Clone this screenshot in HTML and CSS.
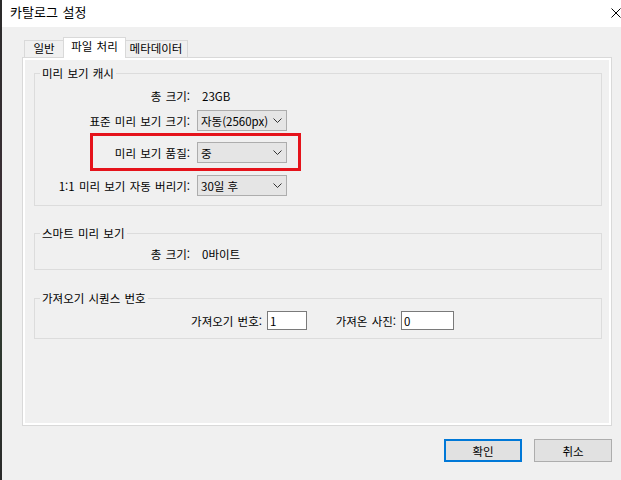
FILE: index.html
```html
<!DOCTYPE html>
<html lang="ko">
<head>
<meta charset="utf-8">
<title>카탈로그 설정</title>
<link rel="stylesheet" href="styles.css">
</head>
<body>
<div class="screen">
  <div class="strip"></div>
  <div class="window">
    <div class="titlebar">
      <span class="title">카탈로그 설정</span>
      <svg class="close" width="10" height="10" viewBox="0 0 10 10"><path d="M0.5 0.5 L9.5 9.5 M9.5 0.5 L0.5 9.5" stroke="#000" stroke-width="1" fill="none"/></svg>
    </div>
    <div class="content">
      <div class="tabs">
        <div class="tab t1">일반</div>
        <div class="tab t2 active">파일 처리</div>
        <div class="tab t3">메타데이터</div>
      </div>
      <div class="panel">
        <fieldset class="group g1">
          <legend>미리 보기 캐시</legend>
          <div class="row r1"><span class="label">총 크기:</span><span class="value">23GB</span></div>
          <div class="row r2"><span class="label">표준 미리 보기 크기:</span>
            <div class="select"><span>자동(2560px)</span><svg width="9" height="5" viewBox="0 0 9 5"><polyline points="0.5,0.5 4.5,4.5 8.5,0.5" fill="none" stroke="#333" stroke-width="1"/></svg></div>
          </div>
          <div class="row r3"><span class="label">미리 보기 품질:</span>
            <div class="select"><span>중</span><svg width="9" height="5" viewBox="0 0 9 5"><polyline points="0.5,0.5 4.5,4.5 8.5,0.5" fill="none" stroke="#333" stroke-width="1"/></svg></div>
            <div class="highlight"></div>
          </div>
          <div class="row r4"><span class="label">1:1 미리 보기 자동 버리기:</span>
            <div class="select"><span>30일 후</span><svg width="9" height="5" viewBox="0 0 9 5"><polyline points="0.5,0.5 4.5,4.5 8.5,0.5" fill="none" stroke="#333" stroke-width="1"/></svg></div>
          </div>
        </fieldset>
        <fieldset class="group g2">
          <legend>스마트 미리 보기</legend>
          <div class="row r5"><span class="label">총 크기:</span><span class="value">0바이트</span></div>
        </fieldset>
        <fieldset class="group g3">
          <legend>가져오기 시퀀스 번호</legend>
          <div class="seqrow">
            <span class="slabel l1">가져오기 번호:</span>
            <div class="input i1">1</div>
            <span class="slabel l2">가져온 사진:</span>
            <div class="input i2">0</div>
          </div>
        </fieldset>
      </div>
      <div class="buttons">
        <div class="btn ok">확인</div>
        <div class="btn cancel">취소</div>
      </div>
    </div>
  </div>
</div>
</body>
</html>
```
FILE: styles.css
```css
* { box-sizing: border-box; }
html, body { margin: 0; padding: 0; }
body {
  width: 621px;
  height: 480px;
  overflow: hidden;
  background: #f0f0f0;
  font-family: "Noto Sans CJK KR", "Noto Sans", sans-serif;
  font-size: 11.5px;
  word-spacing: 1px;
  color: #000;
}
.screen { display: flex; height: 480px; }
.strip {
  width: 2px;
  flex: none;
  background: linear-gradient(#2a2a2a, #3a2f35 40%, #2f3a30 70%, #2a2a2a);
}
.window { flex: 1; display: flex; flex-direction: column; }
.titlebar {
  height: 27px;
  background: #fff;
  display: flex;
  align-items: center;
  justify-content: space-between;
  padding: 0 0 4px 8px;
}
.title { font-size: 13px; }
.close { margin-top: 2px; }
.content { padding: 10px 9px 0 20px; }
.tabs {
  display: flex;
  align-items: flex-end;
  height: 20px;
  padding-left: 2px;
}
.tab {
  height: 17px;
  border: 1px solid #d9d9d9;
  border-bottom: none;
  background: #f0f0f0;
  display: flex;
  justify-content: center;
  align-items: center;
  line-height: 1;
}
.t1 { width: 40px; }
.t2 { width: 63px; margin-left: -1px; }
.t3 { width: 63px; margin-left: -1px; border-left: none; }
.tab.active {
  height: 21px;
  margin-bottom: -1px;
  background: #fff;
  position: relative;
  z-index: 1;
  padding-bottom: 3px;
}
.panel {
  width: 590px;
  height: 369px;
  border: 1px solid #d9d9d9;
  box-shadow: inset 0 0 0 2px #fff;
  padding: 7px 9px 0 11px;
}
.group {
  margin: 0;
  padding: 0;
  min-width: 0;
  border: 1px solid #dcdcdc;
}
.group legend {
  padding: 0 2px;
  margin-left: 5px;
  line-height: 16px;
  height: 16px;
}
.row {
  display: grid;
  grid-template-columns: 155px auto;
  column-gap: 7px;
  align-items: center;
  height: 21px;
}
.label { text-align: right; white-space: nowrap; }
.value { padding-left: 5px; }
.r1 { margin-top: 4px; }
.r2 { margin-top: 4px; }
.r3 { margin-top: 11px; position: relative; }
.r4 { margin-top: 12px; margin-bottom: 9px; }
.select {
  width: 90px;
  height: 21px;
  border: 1px solid #adadad;
  background: #e5e5e5;
  display: flex;
  align-items: center;
  justify-content: space-between;
  padding: 0 4px 0 3px;
  word-spacing: 0;
}
.highlight {
  position: absolute;
  left: 55px;
  top: -9px;
  width: 211px;
  height: 38px;
  border: 3px solid #e5131b;
}
.g2 { margin-top: 19px; }
.r5 { margin-top: 2px; margin-bottom: 5px; }
.g3 { margin-top: 20px; }
.seqrow {
  display: flex;
  align-items: center;
  height: 19px;
  margin-top: 5px;
  margin-bottom: 8px;
}
.slabel { text-align: right; white-space: nowrap; }
.l1 { width: 227px; }
.l2 { width: 61px; margin-left: 28px; }
.input {
  height: 19px;
  border: 1px solid #7a7a7a;
  background: #fff;
  margin-left: 5px;
  padding-left: 2px;
  display: flex;
  align-items: center;
}
.i1 { width: 40px; }
.i2 { width: 53px; }
.buttons {
  display: flex;
  justify-content: flex-end;
  gap: 12px;
  margin-top: 13px;
}
.btn {
  width: 78px;
  height: 23px;
  background: #e1e1e1;
  border: 1px solid #adadad;
  display: flex;
  align-items: center;
  justify-content: center;
}
.btn.ok { border: 2px solid #0078d7; }
```
